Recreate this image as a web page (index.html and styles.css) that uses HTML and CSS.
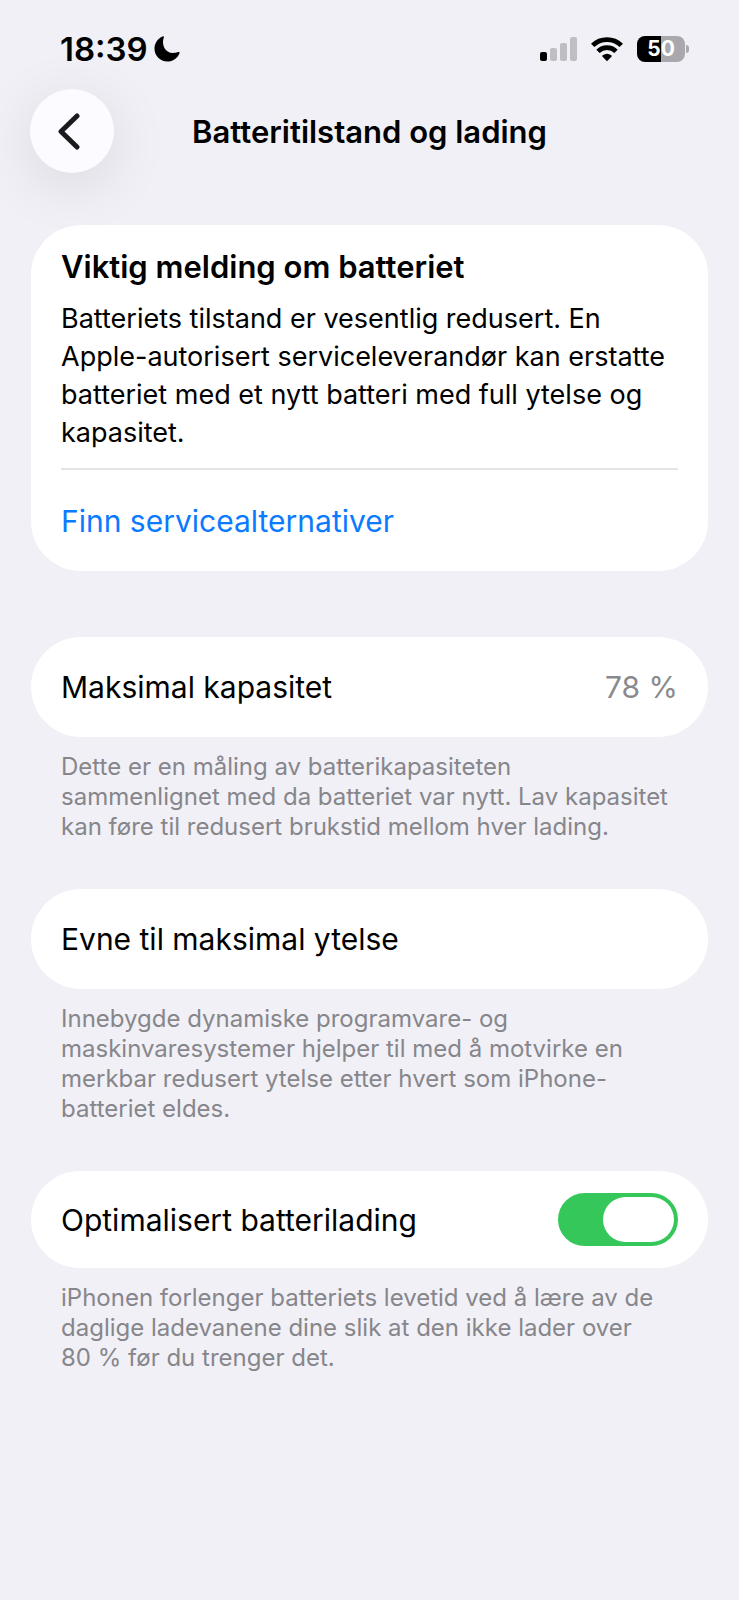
FILE: index.html
```html
<!DOCTYPE html>
<html lang="nb">
<head>
    <meta charset="utf-8">
    <meta name="viewport" content="width=device-width, initial-scale=1">
    <title>Batteritilstand og lading</title>
    <link rel="stylesheet" href="styles.css">
</head>
<body>
    <div class="status-bar">
        <div class="status-left">
            <span class="clock">18:39</span>
            <svg class="moon" width="26" height="26" viewBox="0 0 26 26" aria-hidden="true">
                <path d="M8.6.5c.9-.4 1.600.1 1.200 1C7.200 8.600 11 17 19 17c2 0 4-.4 5.200-.9.900-.4 1.700.2 1.300 1.100C23.600 22.300 18.800 25.500 13.400 25.500 6.200 25.500.500 20 .500 12.600.500 7.200 3.700 2.400 8.600.500z"/>
            </svg>
        </div>
        <div class="status-right">
            <svg width="37" height="25" viewBox="0 0 37 25" aria-hidden="true">
                <rect x="0" y="15" width="7" height="9" rx="2"/>
                <g fill="#bfbfc3">
                    <rect x="10" y="11" width="7" height="13" rx="2"/>
                    <rect x="20" y="6" width="7" height="18" rx="2"/>
                    <rect x="30" y="0" width="7" height="24" rx="2"/>
                </g>
            </svg>
            <svg width="32" height="25" viewBox="0 0 32 25" aria-hidden="true">
                <g fill="none" stroke="#000" stroke-width="4.800">
                    <path d="M1.700 8.400a20.500 20.500 0 0 1 28.600 0"/>
                    <path d="M7 14.400a12.800 12.800 0 0 1 18 0"/>
                </g>
                <path d="M16 24.200l-4.400-4.500c-.5-.5-.4-1 .1-1.400a7 7 0 0 1 8.600 0c.5.400.6.900.1 1.400z"/>
            </svg>
            <div class="battery"><span class="battery-level">50</span></div>
        </div>
    </div>

    <header class="nav-bar">
        <button class="back" type="button" aria-label="Tilbake">
            <svg width="22" height="38" viewBox="0 0 22 38" aria-hidden="true">
                <path d="M19 4L3 19.500l16 15.500"/>
            </svg>
        </button>
        <h1 class="nav-title">Batteritilstand og lading</h1>
    </header>

    <main class="content">
        <section class="card notice">
            <h2 class="notice-title">Viktig melding om batteriet</h2>
            <p class="notice-text">Batteriets tilstand er vesentlig redusert. En Apple-autorisert serviceleverandør kan erstatte batteriet med et nytt batteri med full ytelse og kapasitet.</p>
            <a class="notice-link" href="#">Finn servicealternativer</a>
        </section>

        <section class="group">
            <div class="card row">
                <span>Maksimal kapasitet</span>
                <span class="value">78 %</span>
            </div>
            <p class="footnote">Dette er en måling av batterikapasiteten<br> sammenlignet med da batteriet var nytt. Lav kapasitet kan føre til redusert brukstid mellom hver lading.</p>
        </section>

        <section class="group">
            <div class="card row">
                <span>Evne til maksimal ytelse</span>
            </div>
            <p class="footnote">Innebygde dynamiske programvare- og maskinvaresystemer hjelper til med å motvirke en merkbar redusert ytelse etter hvert som iPhone-batteriet eldes.</p>
        </section>

        <section class="group">
            <div class="card row row-switch">
                <label for="optimized">Optimalisert batterilading</label>
                <input class="switch" id="optimized" type="checkbox" role="switch" checked>
            </div>
            <p class="footnote">iPhonen forlenger batteriets levetid ved å lære av de daglige ladevanene dine slik at den ikke lader over 80&nbsp;% før du trenger det.</p>
        </section>
    </main>
</body>
</html>
```
FILE: styles.css
```css
* {
    box-sizing: border-box;
}
body {
    margin: 0;
    min-height: 100vh;
    background: #f1f0f6;
    color: #000;
    font-family: Inter, "Liberation Sans", sans-serif;
    font-size: 30px;
    line-height: 40px;
}
h1, h2, p {
    margin: 0;
}

/* status bar */
.status-bar {
    display: flex;
    justify-content: space-between;
    align-items: center;
    padding: 29px 50px 0 60px;
}
.status-left {
    display: flex;
    align-items: center;
    gap: 6px;
}
.clock {
    font-size: 33px;
    font-weight: 600;
}
.status-right {
    display: flex;
    align-items: center;
    gap: 14px;
}
.battery {
    display: flex;
    align-items: center;
}
.battery-level {
    width: 48px;
    border-radius: 8px;
    background: linear-gradient(to right, #000 50%, #a9a9ad 50%);
    color: #fff;
    font-size: 21px;
    font-weight: 700;
    line-height: 26px;
    text-align: center;
}
.battery::after {
    content: "";
    width: 3px;
    height: 8px;
    margin-left: 1px;
    border-radius: 0 3px 3px 0;
    background: #a9a9ad;
}

/* navigation bar */
.nav-bar {
    display: grid;
    grid-template-columns: 84px 1fr 84px;
    align-items: center;
    padding: 20px 30px 0;
}
.back {
    display: flex;
    align-items: center;
    justify-content: center;
    width: 84px;
    height: 84px;
    padding: 0 6px 0 0;
    border: 0;
    border-radius: 50%;
    background: #fcfbff;
    box-shadow: 0 12px 60px rgba(0, 0, 0, 0.1);
}
.back path {
    fill: none;
    stroke: #1b1b1e;
    stroke-width: 5;
    stroke-linecap: round;
    stroke-linejoin: round;
}
.nav-title {
    padding-top: 2px;
    font-size: 31px;
    font-weight: 600;
    text-align: center;
}

/* cards */
.content {
    padding: 52px 31px;
}
.card {
    border-radius: 50px;
    background: #fff;
}
.notice {
    padding: 22px 30px 0;
    margin-bottom: 66px;
}
.notice-title {
    font-size: 31px;
    font-weight: 600;
}
.notice-text {
    padding: 13px 0 16px;
    font-size: 27px;
    line-height: 38px;
}
.notice-link {
    display: block;
    padding: 31px 0 30px;
    border-top: 2px solid #e4e4e6;
    color: #0a7aff;
    text-decoration: none;
}
.group {
    margin-bottom: 47px;
}
.row {
    display: flex;
    align-items: center;
    justify-content: space-between;
    padding: 30px;
}
.row-switch {
    padding: 22px 30px;
}
.value {
    color: #8a8a8e;
}
.footnote {
    padding: 15px 30px 0;
    color: #86868b;
    font-size: 24px;
    line-height: 30px;
}

/* switch */
.switch {
    display: flex;
    appearance: none;
    width: 120px;
    height: 53px;
    margin: 0;
    padding: 4px;
    border-radius: 27px;
    background: #d9d9dc;
}
.switch::before {
    content: "";
    width: 71px;
    border-radius: 23px;
    background: #fff;
}
.switch:checked {
    justify-content: flex-end;
    background: #35c759;
}
```
